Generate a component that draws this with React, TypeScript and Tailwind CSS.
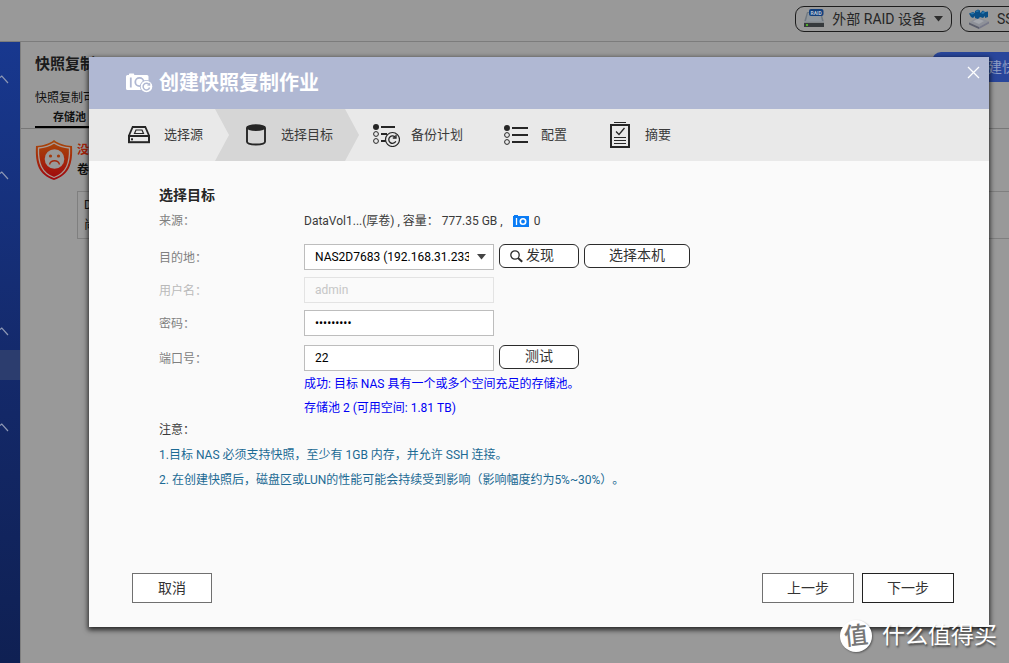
import React from "react";

const font = "font-['Roboto','Noto_Sans_CJK_SC',sans-serif]";

function HeaderButton({ icon, label, className }: { icon: React.ReactNode; label: string; className: string }) {
  return (
    <button
      type="button"
      className={`flex h-[26px] shrink-0 items-center rounded-[9px] border border-[#1c1c1c] text-[14px] whitespace-nowrap text-[#262626] ${className}`}
    >
      {icon}
      <span className="ml-2">{label}</span>
      <svg className="ml-2 h-[6px] w-[9px]" viewBox="0 0 9 6" aria-hidden="true">
        <path d="M0 0h9L4.5 5.5z" fill="#2d2d2d" />
      </svg>
    </button>
  );
}

function RaidIcon() {
  return (
    <svg className="h-[20px] w-[20px]" viewBox="0 0 20 20" aria-hidden="true">
      <path d="M3 3h14l3 10H0z" fill="#707880" />
      <path d="M4 4h12l2 8H2z" fill="#8f969c" />
      <rect x="0" y="13" width="20" height="5" fill="#363a3d" />
      <rect x="0" y="12.500" width="20" height="1.200" fill="#a3a8ab" />
      <rect x="2" y="15" width="2" height="2" fill="#4fb02a" />
      <rect x="5" y="0" width="14.500" height="7" rx="2" fill="#123f7d" />
      <text x="12.200" y="5.600" textAnchor="middle" fontSize="5" fontWeight="700" fill="#b9c4d2">
        RAID
      </text>
    </svg>
  );
}

function SsdIcon() {
  return (
    <svg className="h-[20px] w-[20px]" viewBox="0 0 20 20" aria-hidden="true">
      <path d="M0 13.500 9 8l11 4.500L10 18z" fill="#8e9199" />
      <path d="M0 13.500 10 18v2L0 15.500z" fill="#5a5d6b" />
      <path d="M10 18l10-5.500v2L10 20z" fill="#77798a" />
      <path d="M4 12.500 9 9.500l6 2.500-5 3z" fill="#a3a6ac" />
      <path d="M0 4.500 4 3l2 1V2l3-1.500 2 1V4l3-2.500 2 1.500 3-.5V8l-3 1V7l-2 2-3-1-2 2-3-1V7l-2 2-2-1z" fill="#0a4f86" />
      <path d="M1 4.500 4 3.500l1.500 1L3 5.500zM6.500 2.300 9 1.200l1.500.8L8 3zM12 4l2.500-1.800L16 3.500 14 5z" fill="#2c78ad" />
    </svg>
  );
}

function ShieldIcon() {
  return (
    <svg className="h-[40px] w-[38px] shrink-0" viewBox="0 0 38 40" aria-hidden="true">
      <defs>
        <linearGradient id="shield" x1="0" y1="0" x2="0" y2="1">
          <stop offset="0" stopColor="#a84a0a" />
          <stop offset="0.5" stopColor="#a4280b" />
          <stop offset="1" stopColor="#a0050f" />
        </linearGradient>
      </defs>
      <path d="M19 0c5 4 11 5.500 18 6 1 18-3 29-18 34C4 35 0 24 1 6c7-.5 13-2 18-6z" fill="url(#shield)" />
      <path
        d="M19 3c4.500 3 9.500 4.500 15.500 5 .5 15-3 25-15.500 29.500C6.500 33 3 23 3.500 8 9.500 7.500 14.500 6 19 3z"
        fill="none"
        stroke="#a99a94"
        strokeWidth="1.300"
      />
      <circle cx="19.500" cy="19" r="9.800" fill="#999" />
      <circle cx="15.500" cy="16" r="1.600" fill="#a23a0c" />
      <circle cx="23.500" cy="16" r="1.600" fill="#a23a0c" />
      <path d="M14.500 24.500c1.500-5 8.500-5 10 0" fill="none" stroke="#a0280c" strokeWidth="1.300" />
    </svg>
  );
}

function SidebarChevron({ className }: { className: string }) {
  return (
    <svg className={`h-[9px] w-[9px] shrink-0 ${className}`} viewBox="0 0 9 9" fill="none" aria-hidden="true">
      <path d="M0 2.500 1.800 1 8 8" stroke="#8e98b4" strokeWidth="1.200" />
    </svg>
  );
}

function SnapshotTitleIcon() {
  return (
    <svg className="h-[20px] w-[27px]" viewBox="0 0 27 20" aria-hidden="true">
      <path d="M1.500 2H3V1.200Q3 .5 3.700.5H7.500Q8.200.5 8.200 1.200V2H21q1.500 0 1.500 1.500V17H1.500Q0 17 0 15.500v-12Q0 2 1.500 2z" fill="#fff" />
      <path d="M4.800 4.500v10" stroke="#b0b8d3" strokeWidth="1.800" />
      <circle cx="13.500" cy="9" r="4.200" fill="none" stroke="#b0b8d3" strokeWidth="1.800" />
      <circle cx="20.500" cy="13.500" r="6.600" fill="#b0b8d3" />
      <circle cx="20.500" cy="13.500" r="5.800" fill="#fff" />
      <path d="M22.800 11.300a3.300 3.300 0 1 0 .8 3.200" fill="none" stroke="#b0b8d3" strokeWidth="1.500" />
      <path d="M21 12.500l3.300.3-.2-3.300z" fill="#b0b8d3" />
    </svg>
  );
}

function DriveIcon() {
  return (
    <svg className="h-[18px] w-[22px]" viewBox="0 0 22 18" fill="none" stroke="#262626" aria-hidden="true">
      <path d="M1 9.500 4.700 1h12.600L21 9.500" strokeWidth="1.800" />
      <rect x="1" y="10" width="20" height="6.200" strokeWidth="2" />
      <path d="M6.500 7.500 8 4h6l1.500 3.500z" strokeWidth="1.200" />
      <rect x="3" y="12.300" width="2" height="2" fill="#262626" stroke="none" />
    </svg>
  );
}

function CylinderIcon() {
  return (
    <svg className="h-[22px] w-[20px]" viewBox="0 0 20 22" aria-hidden="true">
      <path d="M1 3.800v14c0 3.600 18 3.600 18 0v-14" fill="none" stroke="#262626" strokeWidth="1.900" />
      <ellipse cx="10" cy="3.600" rx="9.900" ry="3.400" fill="#262626" />
    </svg>
  );
}

function PlanIcon() {
  return (
    <svg className="h-[24px] w-[27px]" viewBox="0 0 27 24" fill="none" stroke="#262626" aria-hidden="true">
      <circle cx="3" cy="4" r="3" fill="#262626" stroke="none" />
      <circle cx="3" cy="11" r="2.400" />
      <circle cx="3" cy="18" r="2.400" />
      <path d="M8 4h14M8 11h6M8 18h5" strokeWidth="2" />
      <circle cx="19.500" cy="16.500" r="7" fill="#e9e9e9" strokeWidth="1.200" />
      <path d="M22.500 14.500a3.700 3.700 0 1 0 .3 3.800" strokeWidth="1.300" />
      <path d="M19.800 15h3.200v-3.200" strokeWidth="1.300" />
    </svg>
  );
}

function ListIcon() {
  return (
    <svg className="h-[20px] w-[24px]" viewBox="0 0 24 20" fill="none" stroke="#262626" aria-hidden="true">
      <circle cx="3" cy="3" r="3" fill="#262626" stroke="none" />
      <circle cx="3" cy="10" r="2.400" />
      <circle cx="3" cy="17" r="2.400" />
      <path d="M8 3h16M8 10h16M8 17h16" strokeWidth="2" />
    </svg>
  );
}

function SummaryIcon() {
  return (
    <svg className="h-[26px] w-[20px]" viewBox="0 0 20 26" fill="none" stroke="#262626" aria-hidden="true">
      <path d="M4 .5h12" />
      <rect x="1" y="3" width="18" height="22" strokeWidth="2" />
      <path d="M6 9.500 9 12.500 14.500 6" strokeWidth="1.300" />
      <path d="M4 15.500h12M4 18.500h12M4 21.500h12" />
    </svg>
  );
}

const boxButton = "flex h-[30px] items-center justify-center border bg-white text-[14px] text-[#333]";
const pillButton =
  "flex h-6 shrink-0 items-center rounded-[6px] border border-[#2b2b2b] bg-white pb-[2px] text-[14px] text-[#333]";
const textBox = "h-[26px] w-[190px] shrink-0 border px-[10px] text-[12px] outline-none";

function Field({ id, label, muted, children }: { id: string; label: string; muted?: boolean; children: React.ReactNode }) {
  return (
    <div className="flex h-[26px] items-start">
      <label htmlFor={id} className={`w-[145px] shrink-0 leading-[28px] ${muted ? "text-[#b9b9b9]" : "text-[#808080]"}`}>
        {label}
      </label>
      <div className="flex gap-[5px]">{children}</div>
    </div>
  );
}

function Dialog() {
  return (
    <div
      role="dialog"
      aria-labelledby="dialog-title"
      className="flex min-w-0 flex-1 flex-col bg-[#fafafa] text-[12px] text-[#3a3a3a] shadow-[0_2px_5px_1px_rgba(0,0,0,0.75)]"
    >
      <header className="flex h-[52px] shrink-0 items-center bg-[#b0b8d3] pl-[37px] pr-[9px]">
        <SnapshotTitleIcon />
        <h1 id="dialog-title" className="ml-[6px] text-[20px] font-bold text-white">
          创建快照复制作业
        </h1>
        <button type="button" aria-label="关闭" className="mb-[21px] ml-auto">
          <svg className="h-[13px] w-[13px]" viewBox="0 0 13 13" aria-hidden="true">
            <path d="M1 1l11 11M12 1 1 12" stroke="#fff" strokeWidth="1.300" />
          </svg>
        </button>
      </header>

      <ol className="flex h-[52px] shrink-0 bg-[#e9e9e9] text-[13px] whitespace-nowrap">
        <li className="flex items-center gap-[14px] pl-[39px] pr-[12px]">
          <DriveIcon />
          选择源
        </li>
        <li
          aria-current="step"
          className="flex items-center gap-[15px] bg-[#d6d6d6] pl-[31px] pr-[26px] [clip-path:polygon(0_0,calc(100%-14px)_0,100%_50%,calc(100%-14px)_100%,0_100%,14px_50%)]"
        >
          <CylinderIcon />
          选择目标
        </li>
        <li className="flex items-center gap-[11px] pl-[14px]">
          <PlanIcon />
          备份计划
        </li>
        <li className="flex items-center gap-[13px] pl-[41px]">
          <ListIcon />
          配置
        </li>
        <li className="flex items-center gap-[15px] pl-[43px]">
          <SummaryIcon />
          摘要
        </li>
      </ol>

      <form className="flex flex-1 flex-col" onSubmit={(e) => e.preventDefault()}>
        <div className="flex-1 px-[70px] pt-[22px]">
          <h2 className="text-[14px] leading-6 font-bold text-[#262626]">选择目标</h2>
          <div className="flex leading-[28px] whitespace-nowrap">
            <span className="w-[145px] shrink-0 text-[#808080]">来源：</span>
            <span>DataVol1...(厚卷) , 容量： 777.35 GB ,</span>
            <span className="ml-[10px] flex items-center gap-[5px]">
              <svg className="h-[12px] w-[16px]" viewBox="0 0 16 12" aria-hidden="true">
                <path d="M0 1h1V0h4v1h11v11H0z" fill="#0a7cf5" />
                <path d="M3.500 3v7" stroke="#fff" strokeWidth="1.300" />
                <circle cx="10" cy="6.500" r="2.700" fill="none" stroke="#fff" strokeWidth="1.600" />
              </svg>
              0
            </span>
          </div>

          <div className="mt-[9px] flex flex-col gap-[7px]">
            <Field id="target" label="目的地：">
              <div className="grid shrink-0">
                <select
                  id="target"
                  className="col-start-1 row-start-1 h-[26px] w-[190px] appearance-none border border-[#bdbdbd] bg-white pl-[10px] pr-6 text-[12px] text-black outline-none"
                >
                  <option>NAS2D7683 (192.168.31.233)</option>
                </select>
                <svg
                  className="pointer-events-none col-start-1 row-start-1 mr-2 h-[6px] w-[9px] self-center justify-self-end"
                  viewBox="0 0 9 6"
                  aria-hidden="true"
                >
                  <path d="M0 0h9L4.500 5.500z" fill="#444" />
                </svg>
              </div>
              <button type="button" className={`${pillButton} w-[80px] gap-[3px] pl-[10px]`}>
                <svg className="mt-[2px] h-[13px] w-[13px]" viewBox="0 0 13 13" fill="none" stroke="#2b2b2b" aria-hidden="true">
                  <circle cx="5" cy="5" r="4.200" strokeWidth="1.300" />
                  <path d="M8 8l4.200 3.800" strokeWidth="2" />
                </svg>
                发现
              </button>
              <button type="button" className={`${pillButton} w-[106px] justify-center`}>
                选择本机
              </button>
            </Field>
            <Field id="user" label="用户名：" muted>
              <input id="user" disabled defaultValue="admin" className={`${textBox} border-[#e3e3e3] bg-[#fafafa] text-[#c6c6c6]`} />
            </Field>
            <Field id="password" label="密码：">
              <input
                id="password"
                type="password"
                defaultValue="password1"
                className={`${textBox} border-[#bdbdbd] bg-white text-black`}
              />
            </Field>
          </div>
          <div className="mt-[9px]">
            <Field id="port" label="端口号：">
              <input id="port" defaultValue="22" className={`${textBox} border-[#bdbdbd] bg-white text-black`} />
              <button type="button" className={`${pillButton} w-[80px] justify-center`}>
                测试
              </button>
            </Field>
          </div>
          <div className="pt-px pl-[145px] leading-6 text-[#0000f5]">
            <p>成功: 目标 NAS 具有一个或多个空间充足的存储池。</p>
            <p>存储池 2 (可用空间: 1.81 TB)</p>
          </div>
          <h3 className="leading-5">注意：</h3>
          <div className="mt-[3px] leading-[25px] text-[#1c6a94]">
            <p>1.目标 NAS 必须支持快照，至少有 1GB 内存，并允许 SSH 连接。</p>
            <p>2. 在创建快照后，磁盘区或LUN的性能可能会持续受到影响（影响幅度约为5%~30%）。</p>
          </div>
        </div>

        <footer className="flex gap-2 pr-[35px] pb-6 pl-[43px]">
          <button type="button" className={`${boxButton} mr-auto w-[80px] border-[#707070]`}>
            取消
          </button>
          <button type="button" className={`${boxButton} w-[92px] border-[#707070]`}>
            上一步
          </button>
          <button type="submit" className={`${boxButton} w-[92px] border-[#222]`}>
            下一步
          </button>
        </footer>
      </form>
    </div>
  );
}

export default function App() {
  return (
    <div lang="zh-CN" className={`relative flex h-screen flex-col overflow-hidden bg-[#999] [text-spacing-trim:space-all] ${font}`}>
      <div className="flex h-[42px] shrink-0 justify-end gap-2 overflow-hidden border-b border-[#7c7c7c] pt-[6px]">
        <HeaderButton icon={<RaidIcon />} label="外部 RAID 设备" className="px-2" />
        <div className="w-[49px] shrink-0">
          <HeaderButton icon={<SsdIcon />} label="SSD" className="w-[150px] px-2" />
        </div>
      </div>

      <div className="flex min-h-0 flex-1">
        <nav className="flex w-5 shrink-0 flex-col bg-linear-to-b from-[#18388f] via-[#142a6c] to-[#0f2053]">
          <SidebarChevron className="mt-[33px]" />
          <SidebarChevron className="mt-[87px]" />
          <SidebarChevron className="mt-[147px]" />
          <div className="mt-[14px] h-[30px] shrink-0 bg-[#2c3d6e]" />
          <SidebarChevron className="mt-[43px]" />
        </nav>
        <main className="min-w-0 flex-1 overflow-hidden border-l border-[#7f7f7f] text-[12px] whitespace-nowrap text-[#111]">
          <div className="flex h-[45px] items-start">
            <h2 className="pt-[10px] pl-[14px] text-[15px] leading-6 font-bold text-[#1b1b1b]">快照复制</h2>
            <div className="mt-[10px] ml-auto w-[77px] overflow-hidden">
              <button type="button" className="flex h-[30px] w-[170px] items-center rounded-[9px] bg-[#29469b] pl-[42px] text-[14px] text-[#8f9dc4]">
                创建快照
              </button>
            </div>
          </div>
          <p className="pl-[14px] leading-[22px]">快照复制可</p>
          <div className="border-b border-[#777] pl-[14px]">
            <div className="h-[19px] w-[88px] border-b-2 border-black pl-[18px] text-[11px] leading-[18px] font-bold">存储池</div>
          </div>
          <div className="flex gap-[4px] pt-[11px] pl-[14px]">
            <ShieldIcon />
            <div className="leading-5">
              <p className="font-bold text-[#a3240b]">没有</p>
              <p className="font-bold">卷</p>
            </div>
          </div>
          <div className="mt-[11px] ml-[56px] h-[48px] border border-r-0 border-[#7f7f7f] pt-[3px] pl-[6px] leading-5">
            <p>DataVol1</p>
            <p>尚未</p>
          </div>
        </main>
      </div>

      <div className="absolute inset-0 flex pt-[57px] pr-5 pb-9 pl-[89px]">
        <Dialog />
      </div>

      <div className="pointer-events-none absolute right-3 bottom-[11px] flex items-center gap-[10px] text-white">
        <span className="flex h-8 w-8 items-center justify-center rounded-full bg-white text-[24px] font-medium text-[#777] shadow-[1px_1px_2px_rgba(0,0,0,0.4)]">
          <span className="-rotate-6">值</span>
        </span>
        <span className="text-[23px] leading-8 [text-shadow:1px_2px_2px_rgba(0,0,0,0.5)]">什么值得买</span>
      </div>
    </div>
  );
}
